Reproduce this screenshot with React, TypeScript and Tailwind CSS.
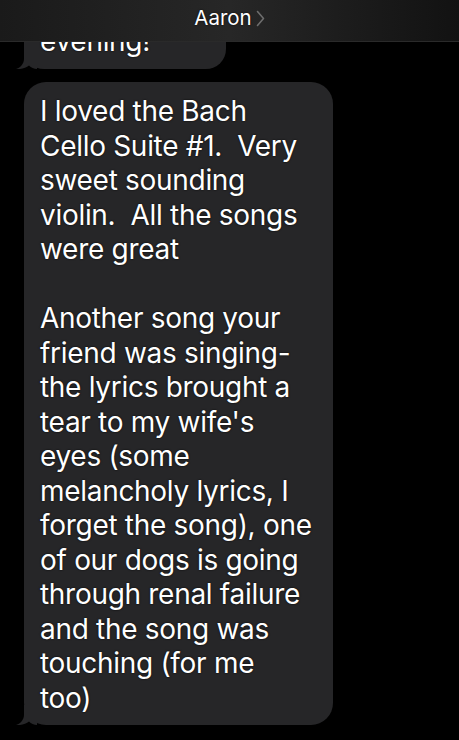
import React from "react";

function Tail({ color }: { color: string }) {
  return (
    <svg
      className="absolute bottom-0 left-[-9px]"
      width="22"
      height="20"
      viewBox="0 0 22 20"
    >
      <path
        d="M9 0 L9 10 C9 15 5 19 1 20 C6 20.5 11 19 14 16.5 C16 18.5 19 20 22 20 L22 0 Z"
        fill={color}
      />
    </svg>
  );
}

export default function App() {
  const font = { fontFamily: "Inter, 'Noto Sans', sans-serif" };
  return (
    <div
      className="relative w-[459px] h-[740px] overflow-hidden bg-black"
      style={font}
    >
      <div className="pt-[12px] pl-[24px]">
        <div className="relative w-[202px] rounded-[20px] bg-[#262628] pl-[16px] pr-[14px] pt-[12px] pb-[10px]">
          <p className="text-[28px] leading-[34.5px] text-white tracking-[-0.3px] [text-shadow:0_0_2px_#000]">
            evening!
          </p>
          <Tail color="#262628" />
        </div>
        <div className="relative mt-[13.5px] w-[309px] rounded-[22px] bg-[#262628] pl-[16px] pr-[14px] pt-[12px] pb-[10px]">
          <p className="whitespace-pre-wrap text-[28px] leading-[34.5px] text-white tracking-[-0.3px] [text-shadow:0_0_2px_#000]">
            {"I loved the Bach\nCello Suite #1.  Very\nsweet sounding\nviolin.  All the songs\nwere great\n\nAnother song your\nfriend was singing-\nthe lyrics brought a\ntear to my wife's\neyes (some\nmelancholy lyrics, I\nforget the song), one\nof our dogs is going\nthrough renal failure\nand the song was\ntouching (for me\ntoo)"}
          </p>
          <Tail color="#262628" />
        </div>
      </div>
      <div className="absolute left-0 top-0 flex h-[42px] w-full items-start justify-center border-b border-[#2a2a2a] bg-gradient-to-r from-[#1a1a1a] via-[#272727] to-[#121212]">
        <div className="mt-[5px] flex items-center gap-[4px]">
          <span className="text-[20.5px] leading-[26px] text-white [text-shadow:0_0_2px_#000]">
            Aaron
          </span>
          <svg width="9" height="17" viewBox="0 0 9 17" className="mt-[1px]">
            <path
              d="M1.5 1.5 L7.5 8.5 L1.5 15.5"
              stroke="#6d6d6d"
              strokeWidth="1.6"
              fill="none"
              strokeLinecap="round"
              strokeLinejoin="round"
            />
          </svg>
        </div>
      </div>
    </div>
  );
}
